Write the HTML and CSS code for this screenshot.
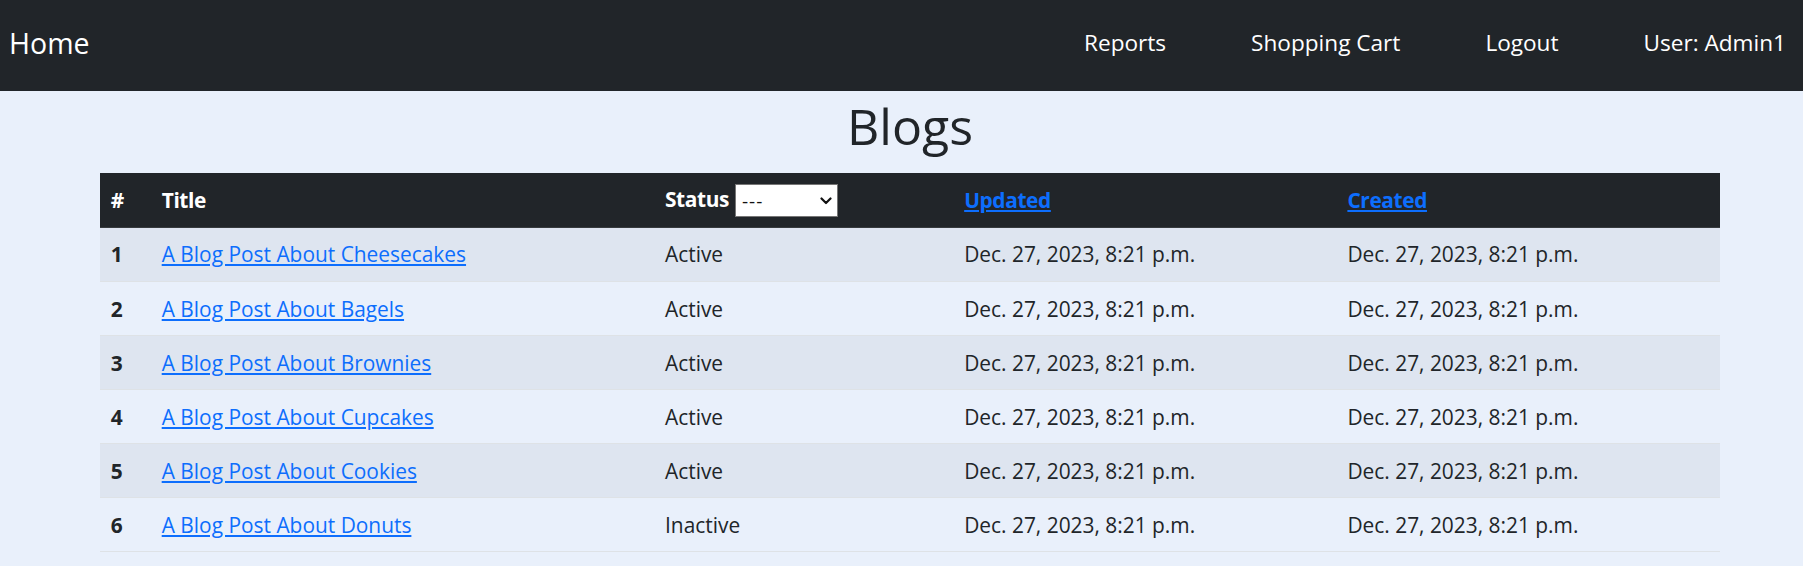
FILE: index.html
```html
<!DOCTYPE html>
<html lang="en">
<head>
<meta charset="utf-8">
<title>Blogs</title>
<link rel="stylesheet" href="styles.css">
</head>
<body>
<nav class="navbar">
  <a class="brand" href="#">Home</a>
  <ul class="nav-links">
    <li><a class="nav-link" href="#">Reports</a></li>
    <li><a class="nav-link" href="#">Shopping Cart</a></li>
    <li><a class="nav-link" href="#">Logout</a></li>
    <li><span class="nav-link">User: Admin1</span></li>
  </ul>
</nav>
<main class="container">
  <h1 class="page-title">Blogs</h1>
  <table class="blogs">
    <colgroup>
      <col class="c-num"><col class="c-title"><col class="c-status"><col class="c-date"><col class="c-date">
    </colgroup>
    <thead>
      <tr>
        <th>#</th>
        <th>Title</th>
        <th>Status <span class="select-wrap"><select class="status-select"><option>---</option><option>Active</option><option>Inactive</option></select><svg class="chev" width="12" height="8" viewBox="0 0 12 8"><path d="M1.5 1.5 L6 6 L10.5 1.5" fill="none" stroke="#111" stroke-width="2.2" stroke-linecap="round" stroke-linejoin="round"/></svg></span></th>
        <th><a class="sort-link" href="#">Updated</a></th>
        <th><a class="sort-link" href="#">Created</a></th>
      </tr>
    </thead>
    <tbody>
      <tr><th>1</th><td><a href="#">A Blog Post About Cheesecakes</a></td><td>Active</td><td>Dec. 27, 2023, 8:21 p.m.</td><td>Dec. 27, 2023, 8:21 p.m.</td></tr>
      <tr><th>2</th><td><a href="#">A Blog Post About Bagels</a></td><td>Active</td><td>Dec. 27, 2023, 8:21 p.m.</td><td>Dec. 27, 2023, 8:21 p.m.</td></tr>
      <tr><th>3</th><td><a href="#">A Blog Post About Brownies</a></td><td>Active</td><td>Dec. 27, 2023, 8:21 p.m.</td><td>Dec. 27, 2023, 8:21 p.m.</td></tr>
      <tr><th>4</th><td><a href="#">A Blog Post About Cupcakes</a></td><td>Active</td><td>Dec. 27, 2023, 8:21 p.m.</td><td>Dec. 27, 2023, 8:21 p.m.</td></tr>
      <tr><th>5</th><td><a href="#">A Blog Post About Cookies</a></td><td>Active</td><td>Dec. 27, 2023, 8:21 p.m.</td><td>Dec. 27, 2023, 8:21 p.m.</td></tr>
      <tr><th>6</th><td><a href="#">A Blog Post About Donuts</a></td><td>Inactive</td><td>Dec. 27, 2023, 8:21 p.m.</td><td>Dec. 27, 2023, 8:21 p.m.</td></tr>
    </tbody>
  </table>
</main>
</body>
</html>
```
FILE: styles.css
```css
html, body {
  margin: 0;
  padding: 0;
}
body {
  background: #e9f0fb;
  color: #212529;
  font-family: "Open Sans", "Noto Sans", sans-serif;
  font-size: 20.9px;
  line-height: 32px;
}
.navbar {
  box-sizing: border-box;
  height: 91px;
  background: #212529;
  display: flex;
  align-items: center;
  justify-content: space-between;
  padding: 0 17px 5px 9px;
}
.brand {
  color: #fff;
  font-size: 28.5px;
  line-height: 40px;
  text-decoration: none;
}
.nav-links {
  display: flex;
  gap: 85px;
  list-style: none;
  margin: 0;
  padding: 0;
}
.nav-link {
  color: #fff;
  font-size: 22.6px;
  text-decoration: none;
}
.container {
  padding: 0 83px 0 100px;
}
.page-title {
  text-align: center;
  font-size: 50px;
  font-weight: 500;
  line-height: 64px;
  margin: 3px 0 15px;
}
.blogs {
  width: 100%;
  border-collapse: collapse;
  table-layout: fixed;
}
.c-num { width: 51px; }
.c-title { width: 503px; }
.c-status { width: 299px; }
.c-date { width: 383px; }
.blogs th,
.blogs td {
  padding: 10.55px 10.67px;
  text-align: left;
  vertical-align: middle;
  border-bottom: 1px solid #dee2e6;
  white-space: nowrap;
}
.blogs thead th {
  background: #212529;
  color: #fff;
  font-weight: 700;
  letter-spacing: -0.4px;
  border-bottom-color: #373b3e;
  padding-top: 9.5px;
  padding-bottom: 9.5px;
}
.blogs tbody th {
  font-weight: 700;
}
.blogs tbody tr:nth-child(odd) > * {
  background: rgba(0, 0, 0, 0.045);
}
a {
  color: #0d6efd;
}
.sort-link {
  color: #0d6efd;
}
.select-wrap {
  position: relative;
  display: inline-block;
  vertical-align: middle;
  margin-left: 1px;
  letter-spacing: 0;
}
.status-select {
  appearance: none;
  -webkit-appearance: none;
  box-sizing: border-box;
  width: 103px;
  height: 33px;
  border: 1px solid #767676;
  border-radius: 0;
  background: #fff;
  color: #111;
  font-family: "Open Sans", sans-serif;
  font-size: 19px;
  letter-spacing: 1px;
  padding: 0 0 0 6px;
  display: block;
}
.chev {
  position: absolute;
  right: 6px;
  top: 13px;
  pointer-events: none;
}
```
